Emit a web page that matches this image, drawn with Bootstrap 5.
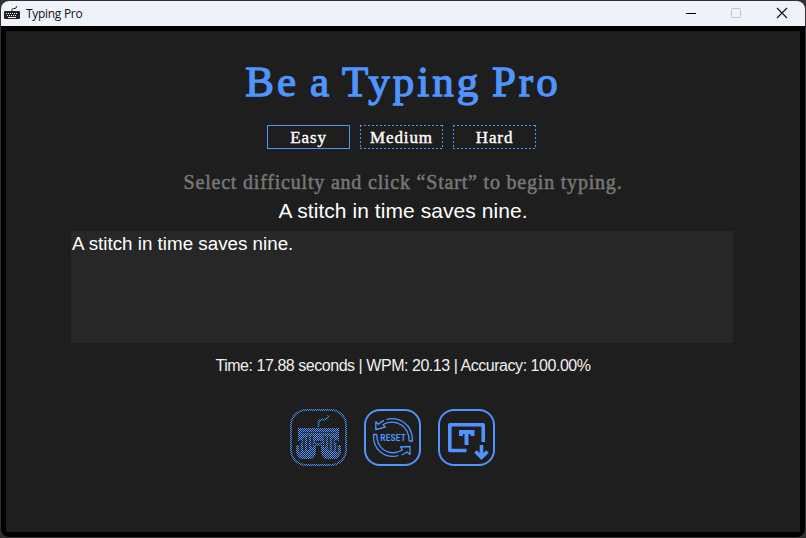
<!DOCTYPE html>
<html lang="en">
<head>
<meta charset="utf-8">
<title>Typing Pro</title>
<link href="https://cdn.jsdelivr.net/npm/bootstrap@5.3.0/dist/css/bootstrap.min.css" rel="stylesheet">
<style>
:root{--accent:#4f94ff}
body{background:#303030;height:538px;padding:1px;font-family:"Liberation Sans",Arial,sans-serif}
.app-window{width:804px;height:536px;border-radius:8px;background:#000}
.title-bar{height:25px;background:#eff3f9;color:#111;font:12px/25px "Open Sans","Noto Sans",sans-serif;padding-left:3px}
.title-name{letter-spacing:-.3px;margin-left:5px}
.stage{margin:5px 5px 0;height:501px;width:794px;background:#1e1e1e;color:#fff}
.serif{font-family:"Liberation Serif",serif}
.headline{color:var(--accent);font-size:43px;line-height:50px;height:50px;margin:26px 0 0;letter-spacing:3px;word-spacing:-3px;-webkit-text-stroke:1.3px var(--accent);white-space:nowrap}
.levels{margin-top:18px;gap:10px;padding-right:3px}
.level{width:83px;height:24px;border:0;border-radius:0;color:#fff!important;padding:0;font-size:17px;line-height:23px;letter-spacing:.9px;-webkit-text-stroke:.4px #fff;
  --h:repeating-linear-gradient(90deg,var(--accent) 0 2px,transparent 2px 4px);
  --v:repeating-linear-gradient(180deg,var(--accent) 0 2px,transparent 2px 4px);
  background:var(--h) 0 0/100% 1px no-repeat,var(--h) 0 100%/100% 1px no-repeat,var(--v) 0 0/1px 100% no-repeat,var(--v) 100% 0/1px 100% no-repeat}
.level.chosen{background:none;box-shadow:inset 0 0 0 1px var(--accent)}
.hint{color:#777;font-size:20px;line-height:24px;margin-top:21px;letter-spacing:.8px;-webkit-text-stroke:.5px #777;white-space:nowrap}
.sample{font-size:21px;line-height:24px;margin-top:5px;letter-spacing:.06px}
.entry{width:662px;height:112px;margin-top:8px;margin-right:2px;background:#272727;color:#fff;border:0;border-radius:0;padding:2px 1px;font-size:18.8px;line-height:21px;resize:none;outline:0}
.stats{font-size:16px;line-height:20px;margin-top:13px;color:#f0f0f0;white-space:nowrap;letter-spacing:-.46px}
.tools{margin-top:33px;gap:17px;padding-right:21px}
.tool{width:57px;height:57px;padding:0;border:0;background:none}
svg{display:block}
</style>
<script src="https://cdn.jsdelivr.net/npm/bootstrap@5.3.0/dist/js/bootstrap.bundle.min.js"></script>
</head>
<body class="overflow-hidden">
<div class="app-window overflow-hidden">
  <header class="title-bar d-flex align-items-center">
    <svg width="17" height="17" viewBox="0 0 17 17"><path d="M8 6V4.500Q8 3.500 9.500 3.500H11Q12.500 3.500 12.500 1" fill="none" stroke="#222"/><rect x="0" y="6" width="16" height="8" rx="1" fill="#222"/><path d="M2 8.500h12M3 10.500h10" stroke="#eff3f9" stroke-dasharray="1 1"/><path d="M4 12.500h8" stroke="#eff3f9"/></svg>
    <span class="title-name">Typing Pro</span>
    <svg class="ms-auto" width="120" height="25" viewBox="685 1 120 25" fill="none"><path d="M686 13.500h10" stroke="#000"/><rect x="731.500" y="8.500" width="9" height="9" rx="1" stroke="#c2c5ca"/><path d="M777 8l10 10M787 8l-10 10" stroke="#111" stroke-width="1.100"/></svg>
  </header>
  <main class="stage d-flex flex-column align-items-center overflow-hidden">
    <h1 class="headline serif fw-normal">Be a Typing Pro</h1>
    <div class="levels d-flex">
      <button class="btn level chosen serif">Easy</button>
      <button class="btn level serif">Medium</button>
      <button class="btn level serif">Hard</button>
    </div>
    <div class="hint serif">Select difficulty and click “Start” to begin typing.</div>
    <div class="sample">A stitch in time saves nine.</div>
    <textarea class="entry" spellcheck="false">A stitch in time saves nine.</textarea>
    <div class="stats">Time: 17.88 seconds | WPM: 20.13 | Accuracy: 100.00%</div>
    <div class="tools d-flex">
      <button class="btn tool" aria-label="Start">
        <svg width="57" height="57" viewBox="0 0 57 57">
          <defs>
            <pattern id="dither" width="2" height="2" patternUnits="userSpaceOnUse"><path d="M0 0h1v1H0zM1 1h1v1H1z" fill="#1e1e1e" shape-rendering="crispEdges"/></pattern>
          </defs>
          <g fill="none" stroke="#4f94ff">
            <rect x="1" y="1" width="55" height="55" rx="15" stroke-width="2"/>
            <path d="M28.500 18v-4q0-3.500 4-3.500h2q3.500 0 4-4.500" stroke-width="2"/>
            <path d="M8 19h41v13H8z" fill="#4f94ff" stroke="none"/>
            <path d="M6 36h3v-3h3v-3h4v-2h3v-2h2v5h3v5h2v7q-1 5-4 7H11q-5-3-5-8z" fill="#4f94ff" stroke="none"/>
            <path d="M51 36h-3v-3h-3v-3h-4v-2h-3v-2h-2v5h-3v5h-2v7q1 5 4 7h11q5-3 5-8z" fill="#4f94ff" stroke="none"/>
            <path d="M10 31v12M14 29v13M18 27v14M22 27v11M47 31v12M43 29v13M39 27v14M35 27v11" stroke="#1e1e1e" stroke-width="1.400"/>
            <path d="M11 23.500h35M24 32.500h9" stroke="#1e1e1e" stroke-opacity=".6"/>
            <path d="M24 33l4.500 3 4.500-3" stroke-width="2"/>
          </g>
          <rect width="57" height="57" fill="url(#dither)"/>
        </svg>
      </button>
      <button class="btn tool" aria-label="Reset">
        <svg width="57" height="57" viewBox="0 0 57 57" fill="none" stroke="#4f94ff">
          <rect x="1" y="1" width="55" height="55" rx="15" stroke-width="2"/>
          <g stroke-width="1.300" stroke-linejoin="round">
            <path d="M22.500 10.400Q32 8 40 13.500Q48.500 19.500 48.500 32H45.200Q45 21 37.500 16Q29 10.500 19 15.500L21.200 18.200L11.800 20.500V12.800L14.500 15.200Q17.500 12.500 20 11.300"/>
            <path d="M34.500 46.500Q25 49.500 16.500 43Q9 37 9.500 25.500H12.800Q12.500 35.500 20 41Q28.500 46.500 38.500 41L36.500 38L46 37.500V45.500L43 43Q40.500 45 37.500 46"/>
          </g>
          <text x="16.300" y="32" textLength="25.500" lengthAdjust="spacing" fill="#4f94ff" stroke="none" font-family="Roboto, sans-serif" font-size="8.200" font-weight="700">RESET</text>
        </svg>
      </button>
      <button class="btn tool" aria-label="Load text">
        <svg width="57" height="57" viewBox="0 0 57 57" fill="none" stroke="#4f94ff">
          <rect x="1" y="1" width="55" height="55" rx="15" stroke-width="2"/>
          <path d="M28.500 41.500H11.800V15.800H45.200V33" stroke-width="3.600" stroke-linejoin="round"/>
          <path d="M23 27v-4h11.500v4M28.500 23v13" stroke-width="4"/>
          <path d="M43.500 36v13M37.500 42.500l6 6 6-6" stroke-width="3.600"/>
        </svg>
      </button>
    </div>
  </main>
</div>
</body>
</html>
